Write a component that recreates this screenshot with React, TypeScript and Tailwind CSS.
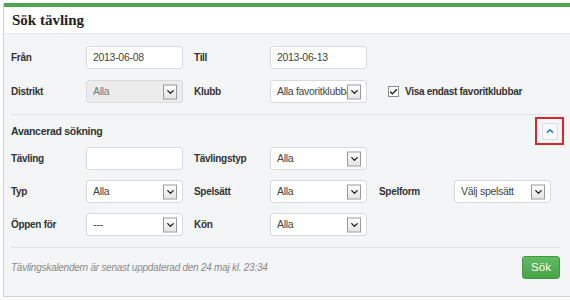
import { Check, ChevronDown, ChevronUp } from "lucide-react";

function Arrow() {
  return (
    <span className="absolute right-[5px] top-1/2 -translate-y-1/2 flex h-[15px] w-[14px] items-center justify-center border border-[#9a9a9a] bg-gradient-to-b from-[#fdfdfd] to-[#e4e4e4]">
      <ChevronDown className="h-[11px] w-[11px] text-[#222]" strokeWidth={3} />
    </span>
  );
}

function Field({ value, select, disabled }: { value?: string; select?: boolean; disabled?: boolean }) {
  return (
    <div
      className={`relative flex h-[23px] w-[97px] items-center overflow-hidden rounded-[3px] border border-[#d8dadd] pl-[6px] text-[10.5px] tracking-[-0.3px] whitespace-nowrap ${
        disabled ? "bg-[#ececec] text-[#777]" : "bg-white text-[#444]"
      }`}
    >
      <span className={select ? "w-[72px] overflow-hidden" : ""}>{value}</span>
      {select && <Arrow />}
    </div>
  );
}

function Label({ children, w = "w-[75px]" }: { children: React.ReactNode; w?: string }) {
  return <div className={`${w} shrink-0 text-[10px] font-bold tracking-[-0.3px] text-[#333]`}>{children}</div>;
}

export default function App() {
  return (
    <div className="h-[300px] w-[570px] overflow-hidden bg-white pl-[3px] pt-[3px] font-['Liberation_Sans',Arial,sans-serif]">
      <div className="h-[294px] border-l border-b border-[#cfd2d6]">
        <div className="h-[4px] bg-[#4ea64f]" />
        <div className="flex h-[27px] items-center border-b border-[#e3e5e8] pl-[8px]">
          <h1 className="font-['Liberation_Serif',Georgia,serif] text-[15px] font-bold text-[#222]">Sök tävling</h1>
        </div>
        <div className="h-[262px] bg-[#f4f5f7] pl-[7px] pr-[7px]">
          <div className="pt-[12px]">
            <div className="flex h-[23px] items-center">
              <Label>Från</Label>
              <Field value="2013-06-08" />
              <Label w="w-[76px] ml-[11px]">Till</Label>
              <Field value="2013-06-13" />
            </div>
            <div className="mt-[11px] flex h-[23px] items-center">
              <Label>Distrikt</Label>
              <Field value="Alla" select disabled />
              <Label w="w-[76px] ml-[11px]">Klubb</Label>
              <Field value="Alla favoritklubbar" select />
              <label className="ml-[21px] flex items-center gap-[6px] text-[10px] font-bold tracking-[-0.3px] text-[#333]">
                <span className="flex h-[11px] w-[11px] items-center justify-center border border-[#8f8f8f] bg-white">
                  <Check className="h-[10px] w-[10px] text-[#111]" strokeWidth={3.5} />
                </span>
                Visa endast favoritklubbar
              </label>
            </div>
          </div>
          <div className="mt-[11px] mr-[3px] border-t border-[#e0e2e5]" />
          <div className="flex items-start justify-between pt-[2px]">
            <div className="pt-[7px] text-[10.5px] font-bold tracking-[-0.3px] text-[#333]">Avancerad sökning</div>
            <div className="mr-[-1px] flex h-[28px] w-[29px] items-center justify-center border-2 border-[#d9262c]">
              <div className="flex h-[17px] w-[16px] items-center justify-center rounded-[2px] border border-[#dcdfe3] bg-[#f7f8fa]">
                <ChevronUp className="h-[10px] w-[10px] text-[#2a7cc0]" strokeWidth={4} />
              </div>
            </div>
          </div>
          <div className="pt-[2px]">
            <div className="flex h-[23px] items-center">
              <Label>Tävling</Label>
              <Field />
              <Label w="w-[76px] ml-[11px]">Tävlingstyp</Label>
              <Field value="Alla" select />
            </div>
            <div className="mt-[10px] flex h-[23px] items-center">
              <Label>Typ</Label>
              <Field value="Alla" select />
              <Label w="w-[76px] ml-[11px]">Spelsätt</Label>
              <Field value="Alla" select />
              <Label w="w-[75px] ml-[12px]">Spelform</Label>
              <Field value="Välj spelsätt" select />
            </div>
            <div className="mt-[10px] flex h-[23px] items-center">
              <Label>Öppen för</Label>
              <Field value="---" select />
              <Label w="w-[76px] ml-[11px]">Kön</Label>
              <Field value="Alla" select />
            </div>
          </div>
          <div className="mt-[11px] mr-[3px] border-t border-[#e0e2e5]" />
          <div className="flex items-center justify-between pt-[8px] pr-[3px]">
            <div className="text-[10px] italic tracking-[-0.25px] text-[#8a8a8a]">
              Tävlingskalendern är senast uppdaterad den 24 maj kl. 23:34
            </div>
            <button className="h-[23px] w-[38px] rounded-[3px] border border-[#3f9a3f] bg-gradient-to-b from-[#62bb62] to-[#47a447] text-[11.5px] text-white">
              Sök
            </button>
          </div>
        </div>
      </div>
    </div>
  );
}
